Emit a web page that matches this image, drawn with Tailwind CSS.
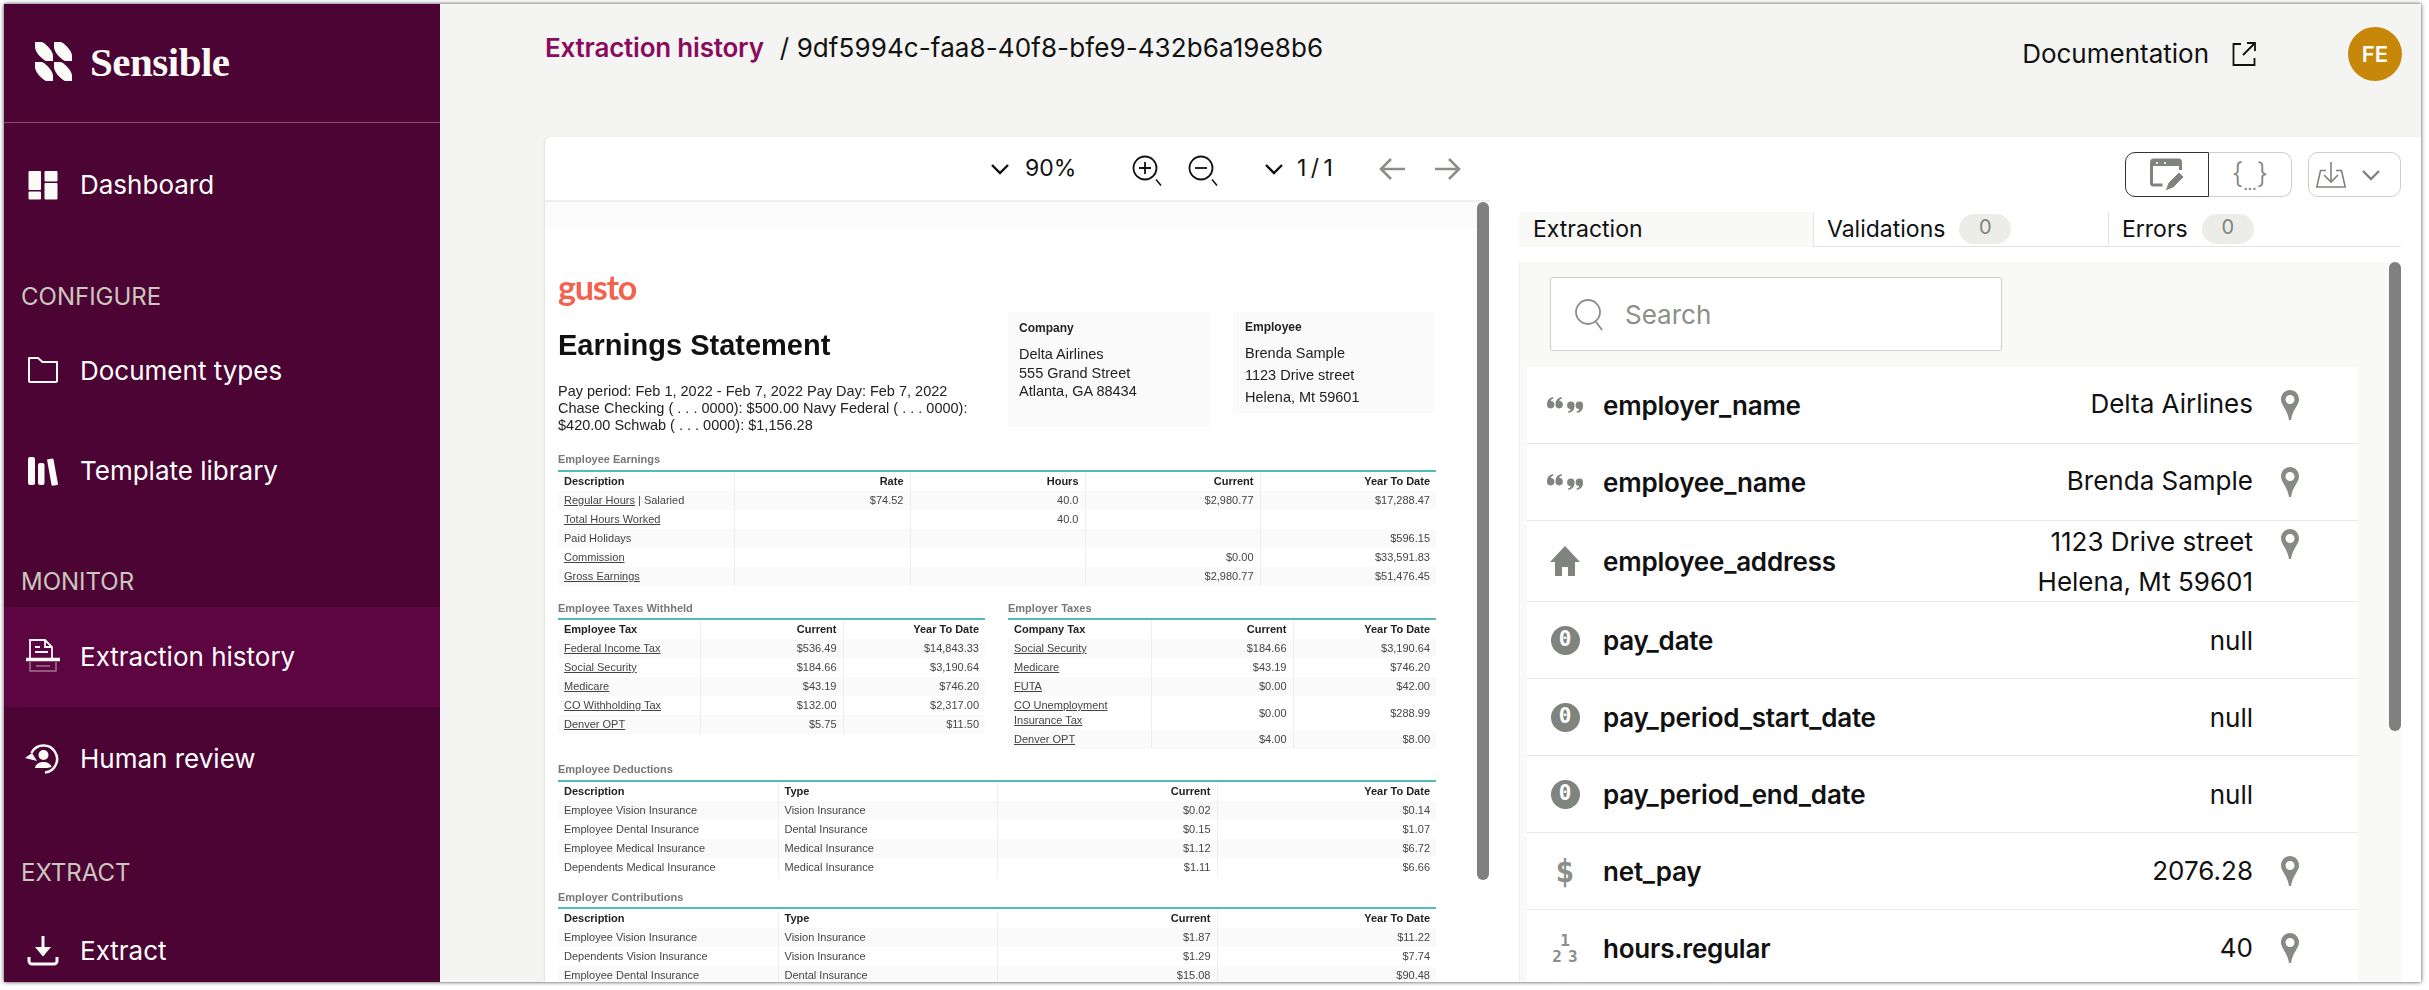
<!doctype html>
<html lang="en">
<head>
<meta charset="utf-8">
<title>Sensible</title>
<script src="https://cdn.jsdelivr.net/npm/@tailwindcss/browser@4"></script>
</head>
<body class="bg-white h-[990px] overflow-hidden font-['Inter',sans-serif]">
<svg class="hidden" width="0" height="0">
  <defs>
    <symbol id="pin" viewBox="0 0 18 30"><path fill-rule="evenodd" fill="#868b85" d="M9 0C4 0 0 4 0 9.500c0 6 6 9 8 20.500h2c2-11.500 8-14.500 8-20.500C18 4 14 0 9 0zM9 5a4.500 4.500 0 1 1 0 9 4.500 4.500 0 1 1 0-9z"/></symbol>
    <symbol id="quote" viewBox="0 0 40 24"><g fill="#7f847e"><path d="M2 11.500C2 7 4 5 8 4l.5 1.500C6.500 6 6 7 5.800 8A3.700 3.700 0 1 1 2 11.500z"/><path d="M10.500 11.500c0-4.500 2-6.500 6-7.500l.5 1.500c-2 .5-2.500 1.500-2.700 2.500a3.700 3.700 0 1 1-3.800 3.500z"/><g transform="rotate(180 20 12)"><path d="M2 11.500C2 7 4 5 8 4l.5 1.500C6.500 6 6 7 5.800 8A3.700 3.700 0 1 1 2 11.500z"/><path d="M10.500 11.500c0-4.500 2-6.500 6-7.500l.5 1.500c-2 .5-2.500 1.500-2.700 2.500a3.700 3.700 0 1 1-3.800 3.500z"/></g></g></symbol>
    <symbol id="chev" viewBox="0 0 20 12"><path d="M2 2l8 8 8-8" fill="none" stroke="currentColor" stroke-width="2.400"/></symbol>
  </defs>
</svg>
<div class="ml-[4px] mt-[4px] w-[2417px] h-[978px] flex overflow-hidden shadow-[0_0_4px_rgba(0,0,0,0.75)]">
  <!-- Sidebar -->
  <aside class="w-[436px] shrink-0 bg-[#4b0433] text-white text-[26px] overflow-hidden">
    <div class="h-[119px] border-b border-white/30 flex items-center pl-[31px] pb-[1px]">
      <svg width="37" height="39" viewBox="0 0 37 39" fill="#fafaf7" class="mb-[2px]">
        <path d="M0 0H7C13 3 18 10 18 14V19H11C5 16 0 9 0 5z"/>
        <path d="M19 0H26C32 3 37 10 37 14V19H30C24 16 19 9 19 5z"/>
        <path d="M0 20H7C13 23 18 30 18 34V39H11C5 36 0 29 0 25z"/>
        <path d="M19 20H26C32 23 37 30 37 34V39H30C24 36 19 29 19 25z"/>
      </svg>
      <span class="ml-[18px] font-['Liberation_Serif',serif] font-bold text-[41px] tracking-[-0.5px] text-[#fafaf7]">Sensible</span>
    </div>

    <a class="mt-[12px] h-[100px] flex items-center pl-[19px] pb-[1px]">
      <svg width="40" height="40" viewBox="0 0 40 40" fill="#fafaf7" class="mr-[17px]"><rect x="5.500" y="6" width="12.500" height="19" rx="1"/><rect x="5.500" y="26.500" width="12.500" height="8" rx="1"/><rect x="21.500" y="6" width="13" height="10.500" rx="1"/><rect x="21.500" y="18" width="13" height="16.500" rx="1"/></svg>
      <span>Dashboard</span>
    </a>

    <div class="mt-[46px] h-[32px] leading-[32px] pl-[17px] text-[24px] text-[#cbc7bf]">CONFIGURE</div>
    <a class="mt-[8px] h-[100px] flex items-center pl-[19px] pb-[1px]">
      <svg width="40" height="40" viewBox="0 0 40 40" fill="none" stroke="#fafaf7" stroke-width="2" class="mr-[17px]"><path d="M6 7h9l4.500 4H34v19a1 1 0 0 1-1 1H7a1 1 0 0 1-1-1z" stroke-linejoin="round"/></svg>
      <span>Document types</span>
    </a>
    <a class="h-[100px] flex items-center pl-[19px] pb-[1px]">
      <svg width="40" height="40" viewBox="0 0 40 40" fill="#fafaf7" class="mr-[17px]"><rect x="5" y="6" width="7" height="28" rx="2"/><rect x="15" y="12" width="6.500" height="22" rx="2"/><path d="M24 8.500l5.500-1a1 1 0 0 1 1 1L35 33a1 1 0 0 1-1 1l-4.500.7a1 1 0 0 1-1-1z"/></svg>
      <span>Template library</span>
    </a>

    <div class="mt-[45px] h-[32px] leading-[32px] pl-[17px] text-[24px] text-[#cbc7bf]">MONITOR</div>
    <a class="mt-[9px] h-[100px] flex items-center pl-[19px] pb-[1px] bg-[#5c0540]">
      <svg width="40" height="40" viewBox="0 0 40 40" fill="none" stroke="#fafaf7" class="mr-[17px] mb-[2px]"><g stroke-width="1.800"><path d="M7 22V4h15l7 7v11"/><path d="M22 4v7h7"/><path d="M12 11h5M12 16h13"/></g><path d="M3 23.500h34" stroke-width="3.500"/><g stroke-width="1.500" opacity=".45"><path d="M7 26v9h26v-9"/><path d="M13 30h14"/></g></svg>
      <span>Extraction history</span>
    </a>
    <a class="h-[104px] flex items-center pl-[19px] pb-[1px]">
      <svg width="40" height="40" viewBox="0 0 40 40" fill="none" stroke="#fafaf7" class="mr-[17px]"><path d="M8.500 14A13.500 13.500 0 1 1 22 33.500" stroke-width="2.500"/><path d="M2 19l7-5 5 8z" fill="#fafaf7" stroke="none"/><circle cx="20.500" cy="16" r="5" fill="#fafaf7" stroke="none"/><path d="M12 29c1-5 5-6 8.500-6s7 1.500 8 5c-3 1-5 1-8 1s-6 0-8.500 0z" fill="#fafaf7" stroke="none"/></svg>
      <span>Human review</span>
    </a>

    <div class="mt-[46px] h-[32px] leading-[32px] pl-[17px] text-[24px] text-[#cbc7bf]">EXTRACT</div>
    <a class="mt-[12px] h-[100px] flex items-center pl-[19px] pb-[1px]">
      <svg width="40" height="40" viewBox="0 0 40 40" fill="none" stroke="#fafaf7" stroke-width="3" class="mr-[17px]"><path d="M20 5v19"/><path d="M12 16h16l-8 9.500z" fill="#fafaf7" stroke="none"/><path d="M6 26v4a3 3 0 0 0 3 3h22a3 3 0 0 0 3-3v-4"/></svg>
      <span>Extract</span>
    </a>
  </aside>

  <!-- Main -->
  <main class="flex-1 min-w-0 flex flex-col bg-[#f4f4f2]">
    <header class="h-[133px] shrink-0 flex justify-between pl-[105px] pr-[19px]">
      <div class="flex items-start pt-[28px] text-[26px] leading-[32px]">
        <span class="font-semibold text-[#8a0a5e] tracking-[-0.2px]">Extraction history</span>
        <span class="ml-[16px] text-[#111] tracking-[0.1px]">/ 9df5994c-faa8-40f8-bfe9-432b6a19e8b6</span>
      </div>
      <div class="flex items-start pt-[23px]">
        <span class="h-[54px] leading-[54px] text-[26px] text-[#111]">Documentation</span>
        <svg width="24" height="24" viewBox="0 0 24 24" fill="none" stroke="#111" stroke-width="1.800" class="ml-[23px] mt-[15px]"><path d="M9 2H1.500v21h21v-7"/><path d="M11 13L23 1M15 1h8v8"/></svg>
        <div class="ml-[92px] w-[54px] h-[54px] rounded-full bg-[#c7880a] text-white flex items-center justify-center font-semibold text-[22px]">FE</div>
      </div>
    </header>

    <section class="flex-1 min-h-0 ml-[105px] bg-white flex rounded-tl-[6px] shadow-[-1px_0_2px_rgba(0,0,0,0.08)]">
      <!-- Left: PDF viewer -->
      <div class="w-[945px] shrink-0 flex flex-col relative">
        <div class="h-[65px] shrink-0 border-b-2 border-[#eeeeec] flex items-center pl-[445px] text-[23px] text-[#111]">
          <svg width="20" height="12" class="text-[#111]"><use href="#chev"/></svg>
          <span class="ml-[15px] w-[48px] whitespace-nowrap">90%</span>
          <svg width="34" height="40" viewBox="0 0 34 40" fill="none" stroke="#111" stroke-width="1.800" class="ml-[59px] mt-[12px]"><circle cx="13" cy="13" r="11.500"/><path d="M13 7v12M7 13h12"/><path d="M24 24.500l5 6" stroke-width="1.500"/></svg>
          <svg width="34" height="40" viewBox="0 0 34 40" fill="none" stroke="#111" stroke-width="1.800" class="ml-[22px] mt-[12px]"><circle cx="13" cy="13" r="11.500"/><path d="M7 13h12"/><path d="M24 24.500l5 6" stroke-width="1.500"/></svg>
          <svg width="20" height="12" class="ml-[42px] text-[#111]"><use href="#chev"/></svg>
          <span class="ml-[13px] w-[41px] whitespace-nowrap tracking-[-1px]">1 / 1</span>
          <svg width="28" height="24" viewBox="0 0 28 24" fill="none" stroke="#8b8f8a" stroke-width="2.600" class="ml-[40px]"><path d="M27 12H3M13 2L3 12l10 10"/></svg>
          <svg width="28" height="24" viewBox="0 0 28 24" fill="none" stroke="#8b8f8a" stroke-width="2.600" class="ml-[28px]"><path d="M1 12h24M15 2l10 10-10 10"/></svg>
        </div>
        <div class="absolute left-[932px] top-[65px] w-[12px] h-[678px] bg-[#808080] rounded-t-[6px] rounded-b-[6px]"></div>
        <div class="flex-1 min-h-0 overflow-hidden">
          <div class="h-[26px] bg-[#fbfbfb]"></div>
          <div class="pl-[13px] w-[891px] text-[11px] text-[#444] font-['Liberation_Sans',sans-serif] blur-[0.4px]">
            <div class="pt-[40px] h-[84px] text-[#f4614d] font-['Lato',sans-serif] font-bold text-[34px] leading-[38px] tracking-[-1.2px]">gusto</div>
            <div class="flex items-start h-[124px]">
              <div class="w-[450px] pt-[15px]">
                <h1 class="font-bold text-[29px] leading-[36px] text-[#111]">Earnings Statement</h1>
                <p class="mt-[20px] w-[420px] text-[14.5px] leading-[17px] text-[#222]">Pay period: Feb 1, 2022 - Feb 7, 2022 Pay Day: Feb 7, 2022 Chase Checking ( . . . 0000): $500.00 Navy Federal ( . . . 0000): $420.00 Schwab ( . . . 0000): $1,156.28</p>
              </div>
              <div class="w-[202px] h-[115px] bg-[#fafafa] pl-[11px] pt-[9px] text-[14.5px] leading-[18.500px] text-[#222]">
                <div class="font-bold text-[12px] leading-[14px]">Company</div>
                <div class="mt-[10px]">Delta Airlines</div>
                <div>555 Grand Street</div>
                <div>Atlanta, GA 88434</div>
              </div>
              <div class="ml-[23px] w-[201px] h-[101px] bg-[#fafafa] pl-[12px] pt-[8px] text-[14.5px] leading-[22px] text-[#222]">
                <div class="font-bold text-[12px] leading-[14px]">Employee</div>
                <div class="mt-[8px]">Brenda Sample</div>
                <div>1123 Drive street</div>
                <div>Helena, Mt 59601</div>
              </div>
            </div>

            <div class="mt-[16px] w-[878px] border-b-2 border-[#4dbfb8] h-[20px] font-bold text-[#777] leading-[14px]">Employee Earnings</div>
            <table class="w-[878px] table-fixed leading-[13px]">
              <thead><tr class="h-[19px] font-bold text-[#222]"><th class="w-[176px] px-[6px] text-left border-r border-[#eee]">Description</th><th class="w-[176px] px-[6px] text-right border-r border-[#eee]">Rate</th><th class="w-[175px] px-[6px] text-right border-r border-[#eee]">Hours</th><th class="w-[175px] px-[6px] text-right border-r border-[#eee]">Current</th><th class="px-[6px] text-right">Year To Date</th></tr></thead>
              <tbody>
                <tr class="h-[19px] bg-[#fafafa]"><td class="px-[6px] border-r border-[#eee]"><u>Regular Hours</u> | Salaried</td><td class="px-[6px] text-right border-r border-[#eee]">$74.52</td><td class="px-[6px] text-right border-r border-[#eee]">40.0</td><td class="px-[6px] text-right border-r border-[#eee]">$2,980.77</td><td class="px-[6px] text-right">$17,288.47</td></tr>
                <tr class="h-[19px]"><td class="px-[6px] border-r border-[#eee]"><u>Total Hours Worked</u></td><td class="px-[6px] text-right border-r border-[#eee]"></td><td class="px-[6px] text-right border-r border-[#eee]">40.0</td><td class="px-[6px] text-right border-r border-[#eee]"></td><td class="px-[6px] text-right"></td></tr>
                <tr class="h-[19px] bg-[#fafafa]"><td class="px-[6px] border-r border-[#eee]">Paid Holidays</td><td class="px-[6px] text-right border-r border-[#eee]"></td><td class="px-[6px] text-right border-r border-[#eee]"></td><td class="px-[6px] text-right border-r border-[#eee]"></td><td class="px-[6px] text-right">$596.15</td></tr>
                <tr class="h-[19px]"><td class="px-[6px] border-r border-[#eee]"><u>Commission</u></td><td class="px-[6px] text-right border-r border-[#eee]"></td><td class="px-[6px] text-right border-r border-[#eee]"></td><td class="px-[6px] text-right border-r border-[#eee]">$0.00</td><td class="px-[6px] text-right">$33,591.83</td></tr>
                <tr class="h-[19px] bg-[#fafafa]"><td class="px-[6px] border-r border-[#eee]"><u>Gross Earnings</u></td><td class="px-[6px] text-right border-r border-[#eee]"></td><td class="px-[6px] text-right border-r border-[#eee]"></td><td class="px-[6px] text-right border-r border-[#eee]">$2,980.77</td><td class="px-[6px] text-right">$51,476.45</td></tr>
              </tbody>
            </table>

            <div class="mt-[15px] flex items-start gap-[23px] w-[878px] h-[148px]">
              <div class="w-[427px]">
                <div class="border-b-2 border-[#4dbfb8] h-[19px] font-bold text-[#777] leading-[14px]">Employee Taxes Withheld</div>
                <table class="w-full table-fixed leading-[13px]">
                  <thead><tr class="h-[19px] font-bold text-[#222]"><th class="w-[142px] px-[6px] text-left border-r border-[#eee]">Employee Tax</th><th class="w-[143px] px-[6px] text-right border-r border-[#eee]">Current</th><th class="px-[6px] text-right">Year To Date</th></tr></thead>
                  <tbody>
                    <tr class="h-[19px] bg-[#fafafa]"><td class="px-[6px] border-r border-[#eee]"><u>Federal Income Tax</u></td><td class="px-[6px] text-right border-r border-[#eee]">$536.49</td><td class="px-[6px] text-right">$14,843.33</td></tr>
                    <tr class="h-[19px]"><td class="px-[6px] border-r border-[#eee]"><u>Social Security</u></td><td class="px-[6px] text-right border-r border-[#eee]">$184.66</td><td class="px-[6px] text-right">$3,190.64</td></tr>
                    <tr class="h-[19px] bg-[#fafafa]"><td class="px-[6px] border-r border-[#eee]"><u>Medicare</u></td><td class="px-[6px] text-right border-r border-[#eee]">$43.19</td><td class="px-[6px] text-right">$746.20</td></tr>
                    <tr class="h-[19px]"><td class="px-[6px] border-r border-[#eee]"><u>CO Withholding Tax</u></td><td class="px-[6px] text-right border-r border-[#eee]">$132.00</td><td class="px-[6px] text-right">$2,317.00</td></tr>
                    <tr class="h-[19px] bg-[#fafafa]"><td class="px-[6px] border-r border-[#eee]"><u>Denver OPT</u></td><td class="px-[6px] text-right border-r border-[#eee]">$5.75</td><td class="px-[6px] text-right">$11.50</td></tr>
                  </tbody>
                </table>
              </div>
              <div class="w-[428px]">
                <div class="border-b-2 border-[#4dbfb8] h-[19px] font-bold text-[#777] leading-[14px]">Employer Taxes</div>
                <table class="w-full table-fixed leading-[13px]">
                  <thead><tr class="h-[19px] font-bold text-[#222]"><th class="w-[143px] px-[6px] text-left border-r border-[#eee]">Company Tax</th><th class="w-[142px] px-[6px] text-right border-r border-[#eee]">Current</th><th class="px-[6px] text-right">Year To Date</th></tr></thead>
                  <tbody>
                    <tr class="h-[19px] bg-[#fafafa]"><td class="px-[6px] border-r border-[#eee]"><u>Social Security</u></td><td class="px-[6px] text-right border-r border-[#eee]">$184.66</td><td class="px-[6px] text-right">$3,190.64</td></tr>
                    <tr class="h-[19px]"><td class="px-[6px] border-r border-[#eee]"><u>Medicare</u></td><td class="px-[6px] text-right border-r border-[#eee]">$43.19</td><td class="px-[6px] text-right">$746.20</td></tr>
                    <tr class="h-[19px] bg-[#fafafa]"><td class="px-[6px] border-r border-[#eee]"><u>FUTA</u></td><td class="px-[6px] text-right border-r border-[#eee]">$0.00</td><td class="px-[6px] text-right">$42.00</td></tr>
                    <tr class="h-[34px]"><td class="px-[6px] border-r border-[#eee] leading-[15px]"><u>CO Unemployment Insurance Tax</u></td><td class="px-[6px] text-right border-r border-[#eee]">$0.00</td><td class="px-[6px] text-right">$288.99</td></tr>
                    <tr class="h-[19px] bg-[#fafafa]"><td class="px-[6px] border-r border-[#eee]"><u>Denver OPT</u></td><td class="px-[6px] text-right border-r border-[#eee]">$4.00</td><td class="px-[6px] text-right">$8.00</td></tr>
                  </tbody>
                </table>
              </div>
            </div>

            <div class="mt-[13px] w-[878px] border-b-2 border-[#4dbfb8] h-[20px] font-bold text-[#777] leading-[14px]">Employee Deductions</div>
            <table class="w-[878px] table-fixed leading-[13px]">
              <thead><tr class="h-[19px] font-bold text-[#222]"><th class="w-[220px] px-[6px] text-left border-r border-[#eee]">Description</th><th class="w-[219px] px-[6px] text-left border-r border-[#eee]">Type</th><th class="w-[220px] px-[6px] text-right border-r border-[#eee]">Current</th><th class="px-[6px] text-right">Year To Date</th></tr></thead>
              <tbody>
                <tr class="h-[19px] bg-[#fafafa]"><td class="px-[6px] border-r border-[#eee]">Employee Vision Insurance</td><td class="px-[6px] border-r border-[#eee]">Vision Insurance</td><td class="px-[6px] text-right border-r border-[#eee]">$0.02</td><td class="px-[6px] text-right">$0.14</td></tr>
                <tr class="h-[19px]"><td class="px-[6px] border-r border-[#eee]">Employee Dental Insurance</td><td class="px-[6px] border-r border-[#eee]">Dental Insurance</td><td class="px-[6px] text-right border-r border-[#eee]">$0.15</td><td class="px-[6px] text-right">$1.07</td></tr>
                <tr class="h-[19px] bg-[#fafafa]"><td class="px-[6px] border-r border-[#eee]">Employee Medical Insurance</td><td class="px-[6px] border-r border-[#eee]">Medical Insurance</td><td class="px-[6px] text-right border-r border-[#eee]">$1.12</td><td class="px-[6px] text-right">$6.72</td></tr>
                <tr class="h-[19px]"><td class="px-[6px] border-r border-[#eee]">Dependents Medical Insurance</td><td class="px-[6px] border-r border-[#eee]">Medical Insurance</td><td class="px-[6px] text-right border-r border-[#eee]">$1.11</td><td class="px-[6px] text-right">$6.66</td></tr>
              </tbody>
            </table>

            <div class="mt-[13px] w-[878px] border-b-2 border-[#4dbfb8] h-[19px] font-bold text-[#777] leading-[14px]">Employer Contributions</div>
            <table class="w-[878px] table-fixed leading-[13px]">
              <thead><tr class="h-[19px] font-bold text-[#222]"><th class="w-[220px] px-[6px] text-left border-r border-[#eee]">Description</th><th class="w-[219px] px-[6px] text-left border-r border-[#eee]">Type</th><th class="w-[220px] px-[6px] text-right border-r border-[#eee]">Current</th><th class="px-[6px] text-right">Year To Date</th></tr></thead>
              <tbody>
                <tr class="h-[19px] bg-[#fafafa]"><td class="px-[6px] border-r border-[#eee]">Employee Vision Insurance</td><td class="px-[6px] border-r border-[#eee]">Vision Insurance</td><td class="px-[6px] text-right border-r border-[#eee]">$1.87</td><td class="px-[6px] text-right">$11.22</td></tr>
                <tr class="h-[19px]"><td class="px-[6px] border-r border-[#eee]">Dependents Vision Insurance</td><td class="px-[6px] border-r border-[#eee]">Vision Insurance</td><td class="px-[6px] text-right border-r border-[#eee]">$1.29</td><td class="px-[6px] text-right">$7.74</td></tr>
                <tr class="h-[19px] bg-[#fafafa]"><td class="px-[6px] border-r border-[#eee]">Employee Dental Insurance</td><td class="px-[6px] border-r border-[#eee]">Dental Insurance</td><td class="px-[6px] text-right border-r border-[#eee]">$15.08</td><td class="px-[6px] text-right">$90.48</td></tr>
              </tbody>
            </table>
          </div>
        </div>
      </div>

      <!-- Right: extraction -->
      <div class="flex-1 min-w-0 flex flex-col pt-[15px] pl-[29px] pr-[20px] overflow-hidden">
        <div class="h-[45px] shrink-0 flex justify-end">
          <div class="flex h-[45px]">
            <div class="w-[84px] border border-[#333] rounded-l-[10px] flex items-center justify-center">
              <svg width="34" height="36" viewBox="0 0 34 36" fill="none"><path d="M30.500 13V5a2 2 0 0 0-2-2h-25a2 2 0 0 0-2 2v21a2 2 0 0 0 2 2h9" stroke="#7f847e" stroke-width="3"/><path d="M2 3h28v6H2z" fill="#7f847e"/><circle cx="7" cy="6" r="1.100" fill="#fff"/><circle cx="15" cy="6" r="1.100" fill="#fff"/><path d="M15 34l3-8 11-11 5 5-11 11z" fill="#7f847e" stroke="#fff" stroke-width="1"/></svg>
            </div>
            <div class="w-[83px] border border-l-0 border-[#cfcfc9] rounded-r-[10px] flex items-center justify-center text-[#7f847e] text-[28px] font-light leading-none pb-[4px]"><span>{</span><span class="text-[13px] font-bold self-end tracking-[0px]">...</span><span>}</span></div>
          </div>
          <div class="ml-[16px] w-[93px] h-[45px] border border-[#cfcfc9] rounded-[10px] flex items-center pl-[7px]">
            <svg width="32" height="36" viewBox="0 0 32 36" fill="none" stroke="#7f847e" stroke-width="1.600"><path d="M10 13.500H4.500L.8 30h28.400l-3.700-16.500H20"/><path d="M15 5v20M8 18l7 7 7-7"/></svg>
            <svg width="20" height="12" class="ml-[13px] text-[#7f847e]"><use href="#chev"/></svg>
          </div>
        </div>

        <div class="mt-[15px] h-[35px] shrink-0 flex text-[23px] leading-[34px] text-[#111]">
          <div class="w-[294px] bg-[#f9f9f7] pl-[14px]">Extraction</div>
          <div class="w-[295px] border-b border-l border-[#e4e4df] pl-[13px] flex">
            <span>Validations</span>
            <span class="ml-[14px] mt-[2px] w-[52px] h-[30px] rounded-full bg-[#ecece8] text-[#7f847e] text-center text-[20px] leading-[27px]">0</span>
          </div>
          <div class="flex-1 border-b border-l border-[#e4e4df] pl-[13px] flex">
            <span>Errors</span>
            <span class="ml-[14px] mt-[2px] w-[52px] h-[30px] rounded-full bg-[#ecece8] text-[#7f847e] text-center text-[20px] leading-[27px]">0</span>
          </div>
        </div>

        <div class="mt-[15px] relative flex-1 min-h-0 bg-[#f9f9f7] pt-[15px] overflow-hidden border-l border-[#eeeeec]">
          <div class="absolute right-0 top-0 w-[12px] h-[469px] bg-[#808080] rounded-[6px]"></div>
          <div class="ml-[30px] w-[452px] h-[74px] bg-white border border-[#cfcfc9] rounded-[2px] flex items-center pl-[22px] text-[26px] text-[#8b8f8a]">
            <svg width="32" height="36" viewBox="0 0 32 36" fill="none" stroke="#8b8f8a" stroke-width="1.800"><circle cx="15" cy="16" r="12"/><path d="M23 26l6 8"/></svg>
            <span class="ml-[20px]">Search</span>
          </div>

          <div class="mt-[16px] ml-[7px] w-[831px] text-[26px] text-[#111]">
            <div class="h-[77px] bg-white border-b border-[#e9e9e7] flex items-center">
              <div class="w-[76px] flex justify-center"><svg width="40" height="24"><use href="#quote"/></svg></div>
              <div class="flex-1 font-semibold tracking-[-0.2px]">employer_name</div>
              <div class="mb-[4px]">Delta Airlines</div>
              <svg width="18" height="30" class="ml-[28px] mr-[59px]"><use href="#pin"/></svg>
            </div>
            <div class="h-[77px] bg-white border-b border-[#e9e9e7] flex items-center">
              <div class="w-[76px] flex justify-center"><svg width="40" height="24"><use href="#quote"/></svg></div>
              <div class="flex-1 font-semibold tracking-[-0.2px]">employee_name</div>
              <div class="mb-[4px]">Brenda Sample</div>
              <svg width="18" height="30" class="ml-[28px] mr-[59px]"><use href="#pin"/></svg>
            </div>
            <div class="h-[81px] bg-white border-b border-[#e9e9e7] flex items-center">
              <div class="w-[76px] flex justify-center"><svg width="32" height="32" viewBox="0 0 32 32" fill="#7f847e"><path d="M16 1L1 17h5v14h7v-9h6v9h7V17h5z"/></svg></div>
              <div class="flex-1 font-semibold tracking-[-0.2px]">employee_address</div>
              <div class="text-right leading-[40px] mt-[2px]"><div>1123 Drive street</div><div>Helena, Mt 59601</div></div>
              <svg width="18" height="30" class="ml-[28px] mr-[59px] self-start mt-[8px]"><use href="#pin"/></svg>
            </div>
            <div class="h-[77px] bg-white border-b border-[#e9e9e7] flex items-center">
              <div class="w-[76px] flex justify-center"><span class="w-[29px] h-[29px] rounded-full bg-[#7f847e] text-white flex items-center justify-center font-['DejaVu_Sans_Mono',monospace] font-bold text-[21px]">0</span></div>
              <div class="flex-1 font-semibold tracking-[-0.2px]">pay_date</div>
              <div class="mt-[1px]">null</div>
              <div class="ml-[28px] mr-[59px] w-[18px]"></div>
            </div>
            <div class="h-[77px] bg-white border-b border-[#e9e9e7] flex items-center">
              <div class="w-[76px] flex justify-center"><span class="w-[29px] h-[29px] rounded-full bg-[#7f847e] text-white flex items-center justify-center font-['DejaVu_Sans_Mono',monospace] font-bold text-[21px]">0</span></div>
              <div class="flex-1 font-semibold tracking-[-0.2px]">pay_period_start_date</div>
              <div class="mt-[1px]">null</div>
              <div class="ml-[28px] mr-[59px] w-[18px]"></div>
            </div>
            <div class="h-[77px] bg-white border-b border-[#e9e9e7] flex items-center">
              <div class="w-[76px] flex justify-center"><span class="w-[29px] h-[29px] rounded-full bg-[#7f847e] text-white flex items-center justify-center font-['DejaVu_Sans_Mono',monospace] font-bold text-[21px]">0</span></div>
              <div class="flex-1 font-semibold tracking-[-0.2px]">pay_period_end_date</div>
              <div class="mt-[1px]">null</div>
              <div class="ml-[28px] mr-[59px] w-[18px]"></div>
            </div>
            <div class="h-[77px] bg-white border-b border-[#e9e9e7] flex items-center">
              <div class="w-[76px] flex justify-center"><span class="text-[#8b8f8a] font-['DejaVu_Sans_Mono',monospace] font-bold text-[32px] leading-none">$</span></div>
              <div class="flex-1 font-semibold tracking-[-0.2px]">net_pay</div>
              <div class="mb-[2px]">2076.28</div>
              <svg width="18" height="30" class="ml-[28px] mr-[59px]"><use href="#pin"/></svg>
            </div>
            <div class="h-[77px] bg-white border-b border-[#e9e9e7] flex items-center">
              <div class="w-[76px] flex flex-col items-center text-[#8b8f8a] font-['DejaVu_Sans_Mono',monospace] font-bold text-[16px] leading-[16px] mt-[2px]"><span>1</span><span class="tracking-[6px] pl-[6px]">23</span></div>
              <div class="flex-1 font-semibold tracking-[-0.2px]">hours.regular</div>
              <div class="mb-[2px]">40</div>
              <svg width="18" height="30" class="ml-[28px] mr-[59px]"><use href="#pin"/></svg>
            </div>
          </div>
        </div>
      </div>
    </section>
  </main>
</div>
</body>
</html>
